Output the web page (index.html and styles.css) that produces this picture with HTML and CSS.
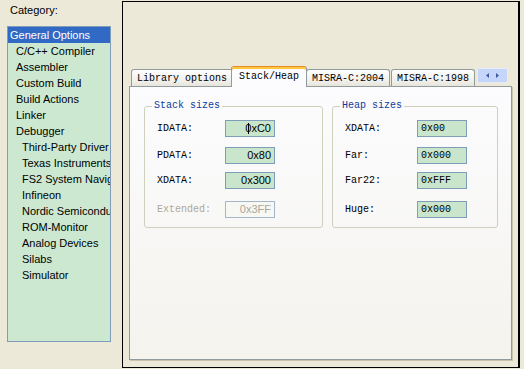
FILE: index.html
```html
<!DOCTYPE html>
<html lang="en">

<head>
    <meta charset="UTF-8">
    <title>Options</title>
    <link rel="stylesheet" href="styles.css">
</head>

<body>
    <!-- Category column -->
    <div class="sidebar">
        <div class="caption">Category:</div>
        <ul class="category-list">
            <li class="selected">General Options</li>
            <li class="lvl1">C/C++ Compiler</li>
            <li class="lvl1">Assembler</li>
            <li class="lvl1">Custom Build</li>
            <li class="lvl1">Build Actions</li>
            <li class="lvl1">Linker</li>
            <li class="lvl1">Debugger</li>
            <li class="lvl2">Third-Party Driver</li>
            <li class="lvl2">Texas Instruments</li>
            <li class="lvl2">FS2 System Navigator</li>
            <li class="lvl2">Infineon</li>
            <li class="lvl2">Nordic Semiconductor</li>
            <li class="lvl2">ROM-Monitor</li>
            <li class="lvl2">Analog Devices</li>
            <li class="lvl2">Silabs</li>
            <li class="lvl2">Simulator</li>
        </ul>
    </div>

    <!-- Options page -->
    <div class="options-box">
        <div class="tab-strip">
            <div class="tab">Library options</div>
            <div class="tab active">Stack/Heap</div>
            <div class="tab">MISRA-C:2004</div>
            <div class="tab">MISRA-C:1998</div>
            <div class="tab-scroll">
                <svg width="31" height="15" viewBox="0 0 31 15">
                    <path d="M12 5 L9 7.5 L12 10 Z" fill="#3b5aa0"/>
                    <path d="M19 5 L22 7.5 L19 10 Z" fill="#3b5aa0"/>
                </svg>
            </div>
        </div>

        <div class="tab-panel">
            <fieldset class="group stack">
                <legend>Stack sizes</legend>
                <div class="row">
                    <span class="label">IDATA:</span>
                    <span class="field"><span class="caret"></span>0xC0</span>
                </div>
                <div class="row">
                    <span class="label">PDATA:</span>
                    <span class="field">0x80</span>
                </div>
                <div class="row tight">
                    <span class="label">XDATA:</span>
                    <span class="field">0x300</span>
                </div>
                <div class="row loose disabled">
                    <span class="label">Extended:</span>
                    <span class="field">0x3FF</span>
                </div>
            </fieldset>

            <fieldset class="group heap">
                <legend>Heap sizes</legend>
                <div class="row">
                    <span class="label">XDATA:</span>
                    <span class="field">0x00</span>
                </div>
                <div class="row">
                    <span class="label">Far:</span>
                    <span class="field">0x000</span>
                </div>
                <div class="row tight">
                    <span class="label">Far22:</span>
                    <span class="field">0xFFF</span>
                </div>
                <div class="row loose">
                    <span class="label">Huge:</span>
                    <span class="field">0x000</span>
                </div>
            </fieldset>
        </div>
    </div>
</body>

</html>
```

FILE: styles.css
```css
body {
    margin: 0;
    width: 524px;
    height: 369px;
    background: #ece9d8;
    display: flex;
    font-family: "Liberation Sans", Arial, sans-serif;
    font-size: 11px;
    color: #000;
    overflow: hidden;
}

/* left column */
.sidebar {
    width: 122px;
    flex: none;
}

.caption {
    padding: 4px 0 0 10px;
    height: 18px;
    line-height: 13px;
}

.category-list {
    list-style: none;
    margin: 4px 0 0 7px;
    padding: 0;
    width: 104px;
    height: 316px;
    box-sizing: border-box;
    border: 1px solid #7f9db9;
    background: #cde8d0;
    overflow: hidden;
}

.category-list li {
    height: 16px;
    line-height: 16px;
    white-space: nowrap;
    overflow: hidden;
    padding-left: 2px;
}

.category-list .lvl1 {
    padding-left: 8px;
}

.category-list .lvl2 {
    padding-left: 14px;
}

.category-list .selected {
    background: #316ac5;
    color: #fff;
}

/* right box */
.options-box {
    margin-top: 1px;
    width: 398px;
    height: 367px;
    box-sizing: border-box;
    border: 1px solid #000;
    border-right-width: 2px;
    padding: 64px 5px 7px 6px;
    display: flex;
    flex-direction: column;
}

.tab-strip {
    height: 20px;
    display: flex;
    align-items: flex-end;
    padding-left: 2px;
    font-family: "Liberation Mono", "DejaVu Sans Mono", monospace;
    font-size: 10px;
}

.tab {
    height: 17px;
    box-sizing: border-box;
    border: 1px solid #919b9c;
    border-bottom: none;
    border-radius: 3px 3px 0 0;
    padding: 0 5px;
    line-height: 17px;
    background: linear-gradient(#fefefe, #f0efea 70%, #e6e4da);
    white-space: nowrap;
}

.tab + .tab {
    margin-left: 1px;
}

.tab.active {
    position: relative;
    z-index: 1;
    height: 21px;
    margin: 0 -2px -1px -2px;
    padding: 0 7px;
    line-height: 19px;
    border-top: 1px solid #e68b2c;
    box-shadow: inset 0 2px #ffc83c;
    background: #fcfcfe;
}

.tab-scroll {
    margin: 0 5px 0 auto;
    align-self: flex-start;
    margin-top: 2px;
    width: 31px;
    height: 15px;
    box-sizing: border-box;
    background: #c6d6fb;
    border: 1px solid #e4ebfb;
    display: flex;
}

.tab-scroll svg {
    margin: -1px;
}

.tab-panel {
    flex: 1;
    width: 383px;
    box-sizing: border-box;
    border: 1px solid #919b9c;
    box-shadow: 1px 1px 0 #c7c5b2;
    background: linear-gradient(#fcfcfe, #f4f3ee);
    display: flex;
    align-items: flex-start;
    padding: 13px 0 0 14px;
    gap: 9px;
}

/* group boxes */
.group {
    margin: 0;
    padding: 8px 12px 9px 12px;
    border: 1px solid #d0d0bf;
    border-radius: 3px;
    font-family: "Liberation Mono", "DejaVu Sans Mono", monospace;
    font-size: 10px;
}

.group legend {
    padding: 0 2px;
    margin-left: -5px;
    line-height: 12px;
    color: #0a3d9e;
}

.group.stack {
    width: 179px;
    box-sizing: border-box;
}

.group.heap {
    width: 166px;
    box-sizing: border-box;
}

.row {
    display: flex;
    align-items: center;
    height: 17px;
}

.row + .row {
    margin-top: 10px;
}

.row.tight {
    margin-top: 8px;
}

.row.loose {
    margin-top: 12px;
}

.label {
    flex: none;
}

.stack .label {
    width: 68px;
}

.heap .label {
    width: 72px;
}

.field {
    position: relative;
    width: 50px;
    height: 17px;
    box-sizing: border-box;
    border: 1px solid #7f9db9;
    background: #c9e6cc;
    line-height: 15px;
    white-space: nowrap;
}

.stack .field {
    font-family: "Liberation Sans", Arial, sans-serif;
    font-size: 11px;
    text-align: right;
    padding-right: 3px;
}

.heap .field {
    font-size: 10px;
    padding-left: 3px;
}

.caret {
    position: absolute;
    left: 22px;
    top: 2px;
    width: 1px;
    height: 11px;
    background: #000;
}

.row.disabled .label {
    color: #aca899;
}

.row.disabled .field {
    background: #f7f7f4;
    color: #aca899;
    border-color: #a5b6c8;
}
```
